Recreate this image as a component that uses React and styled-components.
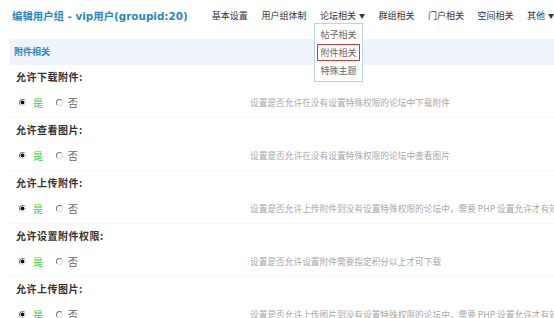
import React from "react";
import styled, { createGlobalStyle } from "styled-components";

const GlobalStyle = createGlobalStyle`
  html, body {
    margin: 0;
    padding: 0;
    background: #fff;
    overflow: hidden;
  }
  body {
    font-family: "DejaVu Sans", "Noto Sans CJK SC", sans-serif;
    color: #333;
  }
`;

const navItems = [
  { label: "基本设置" },
  { label: "用户组体制" },
  { label: "论坛相关", arrow: true, open: true },
  { label: "群组相关" },
  { label: "门户相关" },
  { label: "空间相关" },
  { label: "其他", arrow: true },
];

const subItems = ["帖子相关", "附件相关", "特殊主题"];

const settings = [
  { title: "允许下载附件:", desc: "设置是否允许在没有设置特殊权限的论坛中下载附件" },
  { title: "允许查看图片:", desc: "设置是否允许在没有设置特殊权限的论坛中查看图片" },
  {
    title: "允许上传附件:",
    desc: "设置是否允许上传附件到没有设置特殊权限的论坛中，需要 PHP 设置允许才有效",
  },
  { title: "允许设置附件权限:", desc: "设置是否允许设置附件需要指定积分以上才可下载" },
  {
    title: "允许上传图片:",
    desc: "设置是否允许上传图片到没有设置特殊权限的论坛中，需要 PHP 设置允许才有效",
  },
];

function App() {
  return (
    <>
      <GlobalStyle />
      <Page>
        <Header>
          <Title>编辑用户组 - vip用户(groupid:20)</Title>
          <Nav>
            {navItems.map((item) => (
              <NavItem key={item.label}>
                {item.label}
                {item.arrow && <Arrow>▼</Arrow>}
                {item.open && (
                  <Dropdown>
                    {subItems.map((sub, i) => (
                      <SubItem key={sub} active={i === 1}>
                        {sub}
                      </SubItem>
                    ))}
                  </Dropdown>
                )}
              </NavItem>
            ))}
          </Nav>
        </Header>

        <Band>附件相关</Band>

        {settings.map((s) => (
          <Block key={s.title}>
            <BlockTitle>{s.title}</BlockTitle>
            <RadioRow>
              <Choices>
                <Radio checked />
                <Label yes>是</Label>
                <Radio />
                <Label>否</Label>
              </Choices>
              <Desc>{s.desc}</Desc>
            </RadioRow>
          </Block>
        ))}
      </Page>
    </>
  );
}

const Page = styled.div`
  width: 554px;
  height: 318px;
  overflow: hidden;
`;

const Header = styled.div`
  display: flex;
  align-items: center;
  justify-content: space-between;
  height: 31px;
  padding: 0 0 0 12px;
  position: relative;
  z-index: 2;
`;

const Title = styled.h1`
  margin: 0;
  font-size: 10.4px;
  font-weight: bold;
  color: #2a88bf;
  white-space: nowrap;
`;

const Nav = styled.ul`
  display: flex;
  list-style: none;
  margin: 0;
  padding: 0;
  gap: 13.5px;
  margin-right: 0;
`;

const NavItem = styled.li`
  position: relative;
  font-size: 9px;
  color: #333;
  white-space: nowrap;
  font-family: "Noto Sans CJK SC", sans-serif;
`;

const Arrow = styled.span`
  font-size: 6px;
  margin-left: 3px;
  vertical-align: 1px;
`;

const Dropdown = styled.div`
  position: absolute;
  top: 14px;
  left: -6px;
  width: 47px;
  padding: 2px 0;
  background: #fff;
  border: 1px solid #b9d4ea;
  display: flex;
  flex-direction: column;
  gap: 1px;
`;

const SubItem = styled.div`
  margin: 0 2px;
  height: 15px;
  line-height: 15px;
  text-align: center;
  font-size: 9px;
  color: #666;
  border: 1px solid ${(p) => (p.active ? "#d2343c" : "transparent")};
`;

const Band = styled.div`
  margin: 8px 0 0 10px;
  height: 26px;
  line-height: 26px;
  padding-left: 4px;
  background: #eef4fa;
  color: #2a88bf;
  font-size: 9px;
  font-weight: bold;
  font-family: "Noto Sans CJK SC", sans-serif;
`;

const Block = styled.div`
  margin-left: 10px;
  border-bottom: 1px solid #f6f7f7;
  height: 52px;
`;

const BlockTitle = styled.div`
  height: 24px;
  line-height: 24px;
  padding-left: 6px;
  font-size: 10px;
  font-weight: bold;
  color: #333;
  font-family: "Noto Sans CJK SC", sans-serif;
  letter-spacing: 0.5px;
`;

const RadioRow = styled.div`
  display: grid;
  grid-template-columns: 231px 1fr;
  align-items: center;
  height: 26px;
  padding-left: 9px;
`;

const Choices = styled.div`
  display: flex;
  align-items: center;
`;

const Radio = styled.span`
  width: 7px;
  height: 7px;
  border-radius: 50%;
  box-sizing: border-box;
  border: 1px solid;
  border-color: #777 #ddd #ddd #777;
  background: ${(p) =>
    p.checked ? "radial-gradient(circle, #111 0 1.8px, #fff 2.2px)" : "#fff"};
  margin-right: ${(p) => (p.checked ? "7px" : "5px")};
`;

const Label = styled.span`
  font-size: 10px;
  color: ${(p) => (p.yes ? "#3ccf3c" : "#666")};
  font-family: "Noto Sans CJK SC", sans-serif;
  margin-right: ${(p) => (p.yes ? "13px" : "0")};
`;

const Desc = styled.div`
  font-size: 8.7px;
  color: #a8a8a8;
  white-space: nowrap;
  overflow: hidden;
  font-family: "Noto Sans CJK SC", sans-serif;
`;

export default App;
